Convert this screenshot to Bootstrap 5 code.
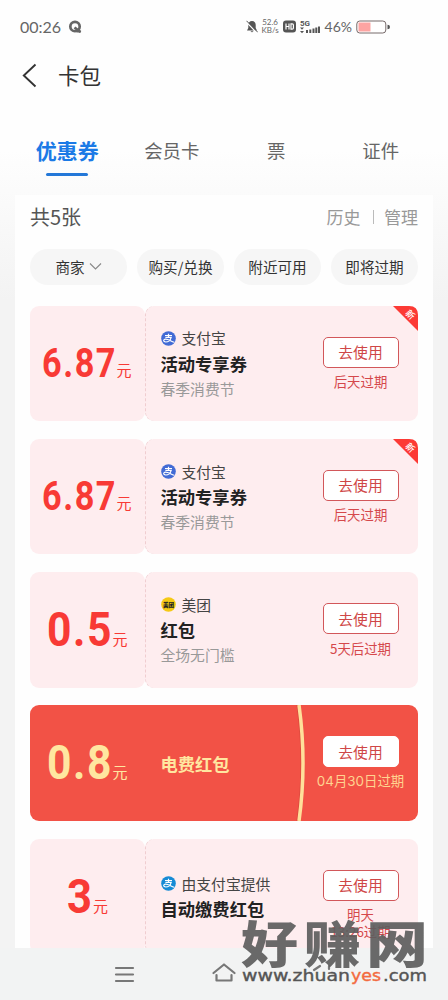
<!DOCTYPE html>
<html lang="zh-CN">
<head>
<meta charset="utf-8">
<meta name="viewport" content="width=device-width, initial-scale=1">
<title>卡包</title>
<link href="https://cdn.jsdelivr.net/npm/bootstrap@5.3.0/dist/css/bootstrap.min.css" rel="stylesheet">
<style>
body{font-family:"Noto Sans CJK SC",sans-serif;background:#f3f3f3;color:#333;line-height:1.2}
.screen{height:1000px;background:linear-gradient(#fefefe 150px,#f3f3f3 300px);}
.status{height:54px;padding:0 58px 0 20px;font-family:Lato,sans-serif;color:#666}
.clock{font-size:16px;width:40px}
.rate{font-size:8px;line-height:7.5px;width:17px}
.pct{font-size:14px}
.titlebar{height:42px;padding-left:22px;font-size:21.5px}
.tabs{margin:0 15px;height:99px;font-size:18.4px;color:#666;padding-top:30px}
.tabs>*{line-height:48px;height:50px}
.tabs .on{font-size:21px;font-weight:700;color:#1b7ae6}
.tabs .on::after{content:"";display:block;width:42px;height:2.6px;border-radius:2px;background:#2478d8;margin:-1px auto 0}
.panel{margin:0 15px;padding:0 15px;background:#fefefe;height:752.5px}
.sum{height:44px;font-size:20px;color:#555}
.links{font-size:17px;color:#999}
.vr-s{width:1px;height:14px;background:#bbb;margin:0 10.5px 0 12px}
.pill{height:36px;width:87px;background:#f6f6f6;font-size:14.6px;line-height:34px;padding-bottom:1px;color:#333;white-space:nowrap}
.pill.first{width:97px}
.pills{margin-top:10px}
.coupons{padding-top:20.5px}
.coupon{height:115.6px;margin-bottom:17.7px;flex:none}
.amt,.info{background:#feedef;border-radius:9px;color:#f23a35}
.amt{width:115px;flex:none}
.info{border-left:1px dashed #f0cdd0;padding-left:14.5px}
.amt svg text{font-family:Roboto,sans-serif;font-weight:700;fill:#f83a35}
.amt svg .figure{letter-spacing:1.8px}
.amt svg .yuan{font-family:"Noto Sans CJK SC",sans-serif;font-weight:400;font-size:15px}
.prov{font-size:14.8px;color:#444;height:25px}
.name{font-size:17.3px;font-weight:700;color:#222;height:25px;line-height:25px}
.desc{font-size:14.8px;color:#999;height:25px;line-height:25px}
.act{width:115px;padding-top:31px;font-size:13.4px;color:#d5484b;line-height:17px}
.use{width:76px;height:31px;border:1.5px solid #d2575a;border-radius:5px;background:#fff;font-size:14.8px;line-height:28px;color:#cf4747;margin-bottom:5.5px}
.hot .amt,.hot .info{background:#f25246;border:0}
.hot .amt{border-radius:9px 0 0 9px}.hot .info{border-radius:0 9px 9px 0;padding-left:15.5px}
.hot .amt svg text{fill:#ffe6a0}.hot .name{color:#ffe6a0}
.hot .act{color:#ffd390}.hot .use{border-color:#fff}
.hot .act span{font-family:Inter,"Noto Sans CJK SC",sans-serif;white-space:nowrap}
.arc{left:151px;top:0}
.corner{right:0;top:0}
.navkeys{left:0;right:0;bottom:0;height:52.5px;background:#f2f3f3}
.mark-layer{left:238px;top:915px}
</style>
</head>
<body>
<svg width="0" height="0" class="position-absolute">
<defs>
<g id="pay"><circle cx="7.5" cy="7.5" r="7.3"/><path d="M4 4.5h7M7.5 2.8v3.5M4.4 6.3h5.8C9.4 9 7.2 11 4.8 11c-2.8 0-2.8-2.8-.2-2.8C7.5 8.200 9.500 10 13.200 11.200" fill="none" stroke="#fff" stroke-width="1.2"/></g>
<g id="new"><path d="M0 0H16Q25 0 25 9V25Z" fill="#fc3a35"/><text x="17.500" y="11.500" transform="rotate(45 17 8)" text-anchor="middle" font-size="9" font-weight="500" fill="#fff">新</text></g>
</defs>
</svg>
<div class="screen position-relative overflow-hidden">
<header class="status d-flex align-items-center">
<span class="clock">00:26</span>
<svg class="ms-2" width="14" height="14" viewBox="0 0 14 14" fill="none" stroke="#666" stroke-width="2.7"><circle cx="7" cy="6.500" r="4.700"/><path d="M6.500 7.500 12.500 12"/><path d="M8.500 11.700h4.500" stroke-width="1.600"/></svg>
<div class="ms-auto d-flex align-items-center">
<svg width="12" height="14" viewBox="0 0 12 14"><path d="M6 1C3.500 1 2.300 2.800 2.300 5v3L1 10.500h10L9.700 8V5C9.700 2.800 8.500 1 6 1ZM4.500 11.300h3q-1.500 2-3 0Z" fill="#555"/><path d="M0 1.500 11 13" stroke="#fff" stroke-width="1.300"/><path d="M.5.8 11.800 12.300" stroke="#555"/></svg>
<div class="rate text-center ms-1">52.6<br>KB/s</div>
<svg class="ms-1" width="13" height="13" viewBox="0 0 13 13"><rect y=".5" width="13" height="12" rx="3" fill="#555"/><path d="M3 3.500v6M6 3.500v6M3 6.500h3M8 3.900h1.200q1.200 0 1.200 1.200v2.800q0 1.200-1.200 1.200H8Z" fill="none" stroke="#fff" stroke-width="1.200"/></svg>
<svg class="ms-1" width="21" height="15" viewBox="0 0 21 15" fill="#555"><text x="0" y="6.800" font-size="8" font-family="Roboto" font-weight="700" textLength="10">5G</text><path d="M0 8.500h4L2 10.800ZM0 12h4L2 14.300ZM6 11h2v3H6ZM9.300 10.500h2V14h-2ZM12.500 9.500h2V14h-2ZM15.300 8.500h2V14h-2ZM18 7.500h2V14h-2Z"/></svg>
<span class="pct ms-1">46%</span>
<svg class="ms-1" width="34" height="14" viewBox="0 0 34 14"><rect x=".8" y="1" width="29" height="12" rx="3" fill="#fff" stroke="#776a6a"/><path d="M2.500 2.500h12v9h-12Z" fill="#fda4a2"/><path d="M31.500 4.800q2.500 0 2.500 2.200t-2.500 2.200Z" fill="#555"/></svg>
</div>
</header>
<div class="titlebar d-flex align-items-center">
<svg width="15" height="25" viewBox="0 0 15 25" fill="none" stroke="#333" stroke-width="1.900"><path d="M13.500 1.500 1.800 12.500l11.700 11"/></svg>
<span style="margin-left:21px">卡包</span>
</div>
<nav class="tabs row g-0 text-center"><div class="col on">优惠券</div><div class="col">会员卡</div><div class="col">票</div><div class="col">证件</div></nav>
<main class="panel">
<div class="sum d-flex align-items-center justify-content-between"><span>共5张</span><div class="links d-flex align-items-center"><span>历史</span><i class="vr-s"></i><span>管理</span></div></div>
<div class="pills d-flex justify-content-between">
<div class="pill first rounded-pill d-flex align-items-center justify-content-center">商家<svg class="ms-1" width="13" height="9" viewBox="0 0 13 9" fill="none" stroke="#888" stroke-width="1.100"><path d="m1 1.500 5.500 5.500L12 1.500"/></svg></div>
<div class="pill rounded-pill d-flex align-items-center justify-content-center">购买/兑换</div>
<div class="pill rounded-pill d-flex align-items-center justify-content-center">附近可用</div>
<div class="pill rounded-pill d-flex align-items-center justify-content-center">即将过期</div>
</div>
<section class="coupons d-flex flex-column">
<article class="coupon d-flex position-relative">
<div class="amt"><svg width="115" height="115"><text class="figure" x="12" y="71" font-size="40.500" textLength="75" lengthAdjust="spacingAndGlyphs">6.87</text><text class="yuan" x="86.500" y="70">元</text></svg></div>
<div class="info flex-grow-1 d-flex"><div class="flex-grow-1 d-flex flex-column justify-content-center"><div class="prov d-flex align-items-center"><svg width="15" height="15" fill="#426bd5" style="margin-right:6px"><use href="#pay"/></svg>支付宝</div><div class="name">活动专享券</div><div class="desc">春季消费节</div></div>
<div class="act d-flex flex-column align-items-center"><button class="btn use p-0">去使用</button><span>后天过期</span></div></div>
<svg class="corner position-absolute" width="25" height="25"><use href="#new"/></svg>
</article>
<article class="coupon d-flex position-relative">
<div class="amt"><svg width="115" height="115"><text class="figure" x="12" y="71" font-size="40.500" textLength="75" lengthAdjust="spacingAndGlyphs">6.87</text><text class="yuan" x="86.500" y="70">元</text></svg></div>
<div class="info flex-grow-1 d-flex"><div class="flex-grow-1 d-flex flex-column justify-content-center"><div class="prov d-flex align-items-center"><svg width="15" height="15" fill="#426bd5" style="margin-right:6px"><use href="#pay"/></svg>支付宝</div><div class="name">活动专享券</div><div class="desc">春季消费节</div></div>
<div class="act d-flex flex-column align-items-center"><button class="btn use p-0">去使用</button><span>后天过期</span></div></div>
<svg class="corner position-absolute" width="25" height="25"><use href="#new"/></svg>
</article>
<article class="coupon d-flex position-relative">
<div class="amt"><svg width="115" height="115"><text class="figure" x="17" y="74" font-size="49" textLength="66" lengthAdjust="spacingAndGlyphs">0.5</text><text class="yuan" x="82.500" y="73">元</text></svg></div>
<div class="info flex-grow-1 d-flex"><div class="flex-grow-1 d-flex flex-column justify-content-center"><div class="prov d-flex align-items-center"><svg width="15" height="15" style="margin-right:6px"><circle cx="7.500" cy="7.500" r="7.300" fill="#f5c914"/><text x="7.500" y="9.700" text-anchor="middle" font-size="5.600" font-weight="900" fill="#222">美团</text></svg>美团</div><div class="name">红包</div><div class="desc">全场无门槛</div></div>
<div class="act d-flex flex-column align-items-center"><button class="btn use p-0">去使用</button><span>5天后过期</span></div></div>
</article>
<article class="coupon hot d-flex position-relative">
<div class="amt"><svg width="115" height="115"><text class="figure" x="17" y="74" font-size="49" textLength="66" lengthAdjust="spacingAndGlyphs">0.8</text><text class="yuan" x="82.500" y="73">元</text></svg></div>
<div class="info flex-grow-1 d-flex position-relative"><div class="flex-grow-1 d-flex flex-column justify-content-center"><div class="name">电费红包</div></div>
<svg class="arc position-absolute" width="10" height="116" fill="none"><path d="M1.500 0Q9.500 58 1.500 116" stroke="#db493d" stroke-width="2"/><path d="M3 0Q11 58 3 116" stroke="#ffe09a" stroke-width="3.500"/></svg>
<div class="act d-flex flex-column align-items-center"><button class="btn use p-0">去使用</button><span>04月30日过期</span></div></div>
</article>
<article class="coupon d-flex position-relative">
<div class="amt"><svg width="115" height="115"><text x="37" y="74" font-size="49" textLength="25" lengthAdjust="spacingAndGlyphs">3</text><text class="yuan" x="63" y="73">元</text></svg></div>
<div class="info flex-grow-1 d-flex"><div class="flex-grow-1 d-flex flex-column justify-content-center"><div class="prov d-flex align-items-center"><svg width="15" height="15" fill="#168bd5" style="margin-right:6px"><use href="#pay"/></svg>由支付宝提供</div><div class="name">自动缴费红包</div></div>
<div class="act d-flex flex-column align-items-center"><button class="btn use p-0">去使用</button><span>明天</span><span>13:26过期</span></div></div>
</article>
</section>
</main>
<footer class="navkeys position-absolute">
<svg width="448" height="52" fill="none" stroke="#777" stroke-width="2.200" stroke-linecap="round" stroke-linejoin="round"><path d="M116 20h17M116 26.500h17M116 33h17"/><path d="m213.500 25 10.500-8.500L234.500 25M216.500 27v5.500h15V27M314 22l6-4M329 18v3"/></svg>
</footer>
<svg class="mark-layer position-absolute" width="200" height="80">
<text y="48" font-size="49.500" font-weight="900" fill="#5d5d5d" fill-opacity=".92"><tspan x="3" textLength="57" lengthAdjust="spacingAndGlyphs">好</tspan><tspan x="66" textLength="57" lengthAdjust="spacingAndGlyphs">赚</tspan><tspan x="128" textLength="62" lengthAdjust="spacingAndGlyphs">网</tspan></text>
<g font-family="DejaVu Sans" font-size="16" fill="#555" stroke="#555" stroke-width=".4"><text x="4" y="66" textLength="108" lengthAdjust="spacingAndGlyphs">www.zhuan</text><text x="113" y="66" fill="#f36b3f" stroke="#f36b3f" textLength="30" lengthAdjust="spacingAndGlyphs">yes</text><text x="145" y="66" textLength="44" lengthAdjust="spacingAndGlyphs">.com</text></g>
</svg>
</div>
<script src="https://cdn.jsdelivr.net/npm/bootstrap@5.3.0/dist/js/bootstrap.bundle.min.js"></script>
</body>
</html>
